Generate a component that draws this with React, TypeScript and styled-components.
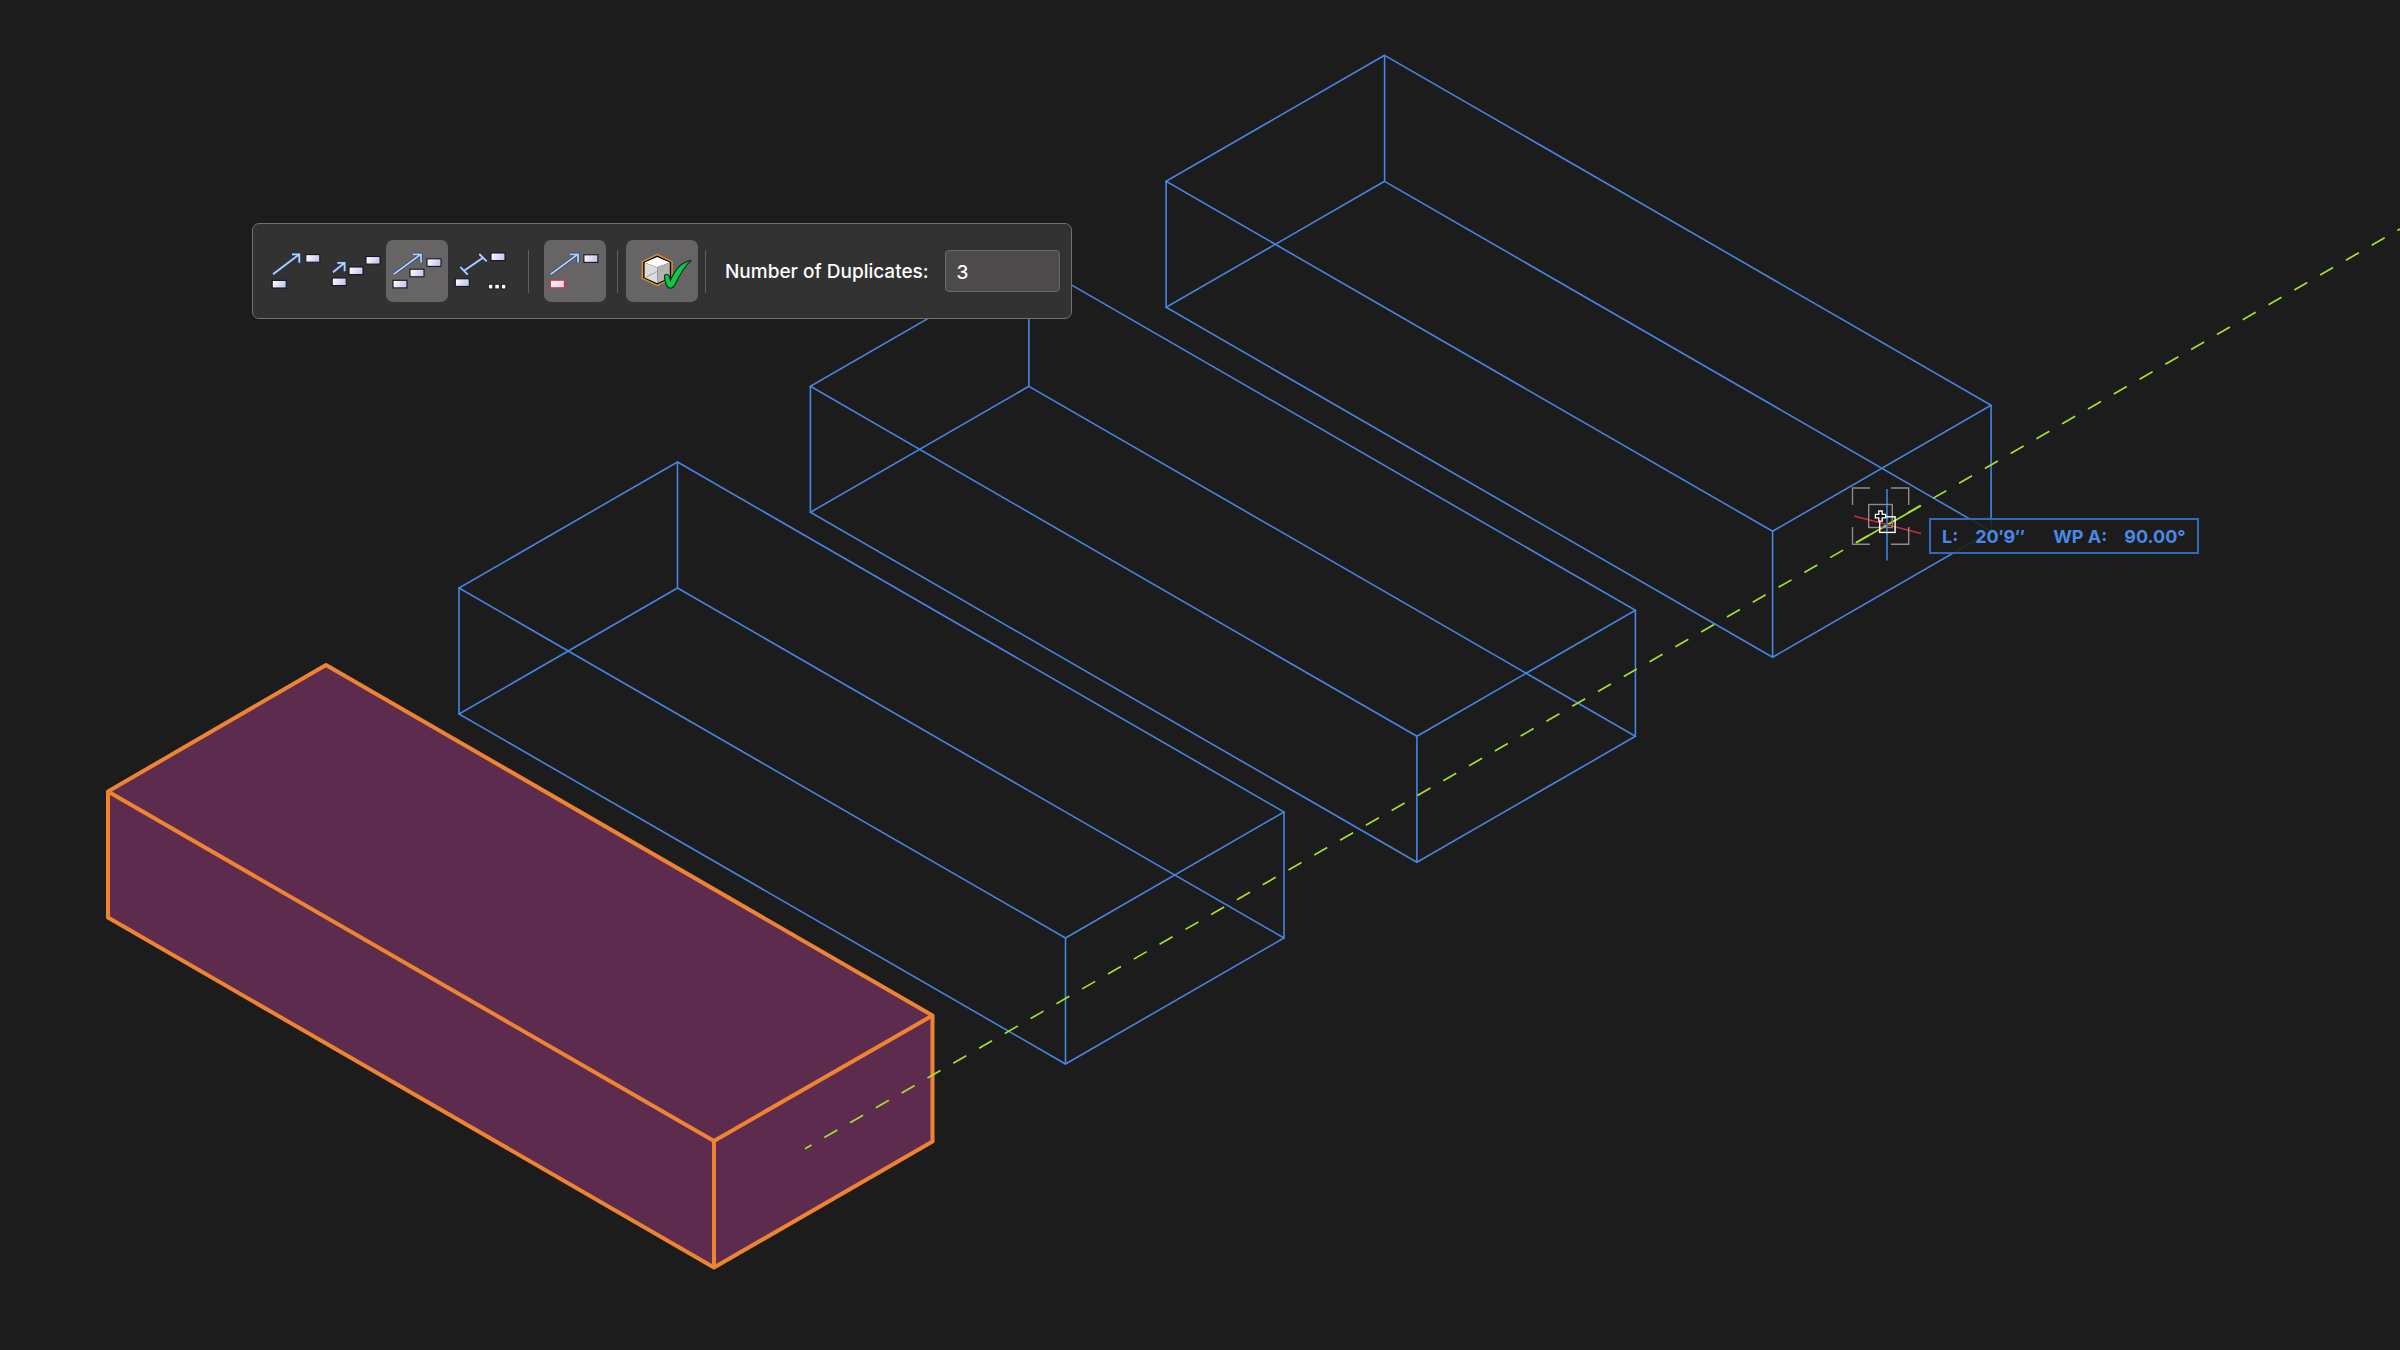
import React, { useState } from "react";
import styled, { createGlobalStyle } from "styled-components";

const GlobalStyle = createGlobalStyle`
  body {
    margin: 0;
    background: #1c1c1c;
    font-family: Inter, "Liberation Sans", sans-serif;
  }
`;

const Workspace = styled.main`
  position: relative;
  min-height: 100vh;
  overflow: hidden;
`;

const Drawing = styled.svg`
  display: block;
  width: 100%;
  height: auto;
`;

const Toolbar = styled.form`
  position: absolute;
  top: 223px;
  left: 252px;
  display: flex;
  align-items: center;
  padding: 16px 11px 16px 9px;
  border: 1px solid #707070;
  border-radius: 7px;
  background: #323232;
`;

const ToolButton = styled.button<{ $wide?: boolean }>`
  width: ${(p) => (p.$wide ? 72 : 62)}px;
  height: 62px;
  padding: 0;
  border: 0;
  border-radius: 7px;
  background: transparent;
  cursor: pointer;

  &[aria-pressed="true"] {
    background: #666465;
  }

  svg {
    display: block;
  }
`;

const Separator = styled.span<{ $before: number; $after: number }>`
  width: 1px;
  height: 43px;
  margin: 0 ${(p) => p.$after}px 0 ${(p) => p.$before}px;
  background: #606060;
`;

const FieldLabel = styled.label`
  margin-right: 16px;
  padding-top: 2px;
  color: #fff;
  font-size: 19px;
  font-weight: 500;
  line-height: 24px;
  white-space: nowrap;
`;

const NumberField = styled.input`
  box-sizing: border-box;
  width: 115px;
  height: 42px;
  padding: 2px 11px 0;
  border: 1px solid #6a6869;
  border-radius: 4px;
  outline: 0;
  background: #4d4a4b;
  color: #fff;
  font: 500 19px Inter, "Liberation Sans", sans-serif;
`;

const DataBar = styled.dl`
  position: absolute;
  top: 518px;
  left: 1929px;
  display: flex;
  align-items: center;
  gap: 28px;
  margin: 0;
  padding: 7px 11px 5px 11px;
  border: 2px solid #3368b5;
  background: rgba(28, 28, 28, 0.88);
  color: #4a88e6;
  font-size: 18px;
  font-weight: 700;
  line-height: 20px;
  white-space: nowrap;
`;

const DataPair = styled.div`
  display: flex;
  gap: 17px;

  dd {
    margin: 0;
  }
`;

/* Extents of one extruded box, measured from its top corner. */
const wirePath = (x: number, y: number) =>
  [
    `M${x} ${y}l-218.5 126l606.5 350l218.5 -126z`,
    `M${x} ${y + 126}l-218.5 126l606.5 350l218.5 -126z`,
    `M${x} ${y}v126`,
    `M${x - 218.5} ${y + 126}v126`,
    `M${x + 388} ${y + 476}v126`,
    `M${x + 606.5} ${y + 350}v126`,
  ].join("");

const duplicates: [number, number][] = [
  [677.5, 462],
  [1028.9, 260.3],
  [1384.6, 55.3],
];

function Chip({ x, y, red }: { x: number; y: number; red?: boolean }) {
  return (
    <rect
      x={x}
      y={y}
      width="14"
      height="7.6"
      fill={red ? "url(#chipRed)" : "url(#chip)"}
      stroke={red ? "#e8283c" : "#14141c"}
      strokeWidth="1.1"
    />
  );
}

function Stroke({ d }: { d: string }) {
  return (
    <g fill="none">
      <path d={d} stroke="#22406e" strokeWidth="3" />
      <path d={d} stroke="#b4d0fa" strokeWidth="1.8" />
    </g>
  );
}

function Icon({ width = 62, children }: { width?: number; children: React.ReactNode }) {
  return (
    <svg width={width} height="62" viewBox={`0 0 ${width} 62`} aria-hidden="true">
      {children}
    </svg>
  );
}

const modes = [
  {
    name: "Distribute from first to last",
    icon: (
      <>
        <Stroke d="M11 34.3L37.3 14.3M30 14.3H37.3V22.7" />
        <Chip x={43.8} y={14.6} />
        <Chip x={10.2} y={40.4} />
      </>
    ),
  },
  {
    name: "Offset by spacing",
    icon: (
      <>
        <Stroke d="M9 32.3L20.4 23M13.3 22.9H20.6V31.3" />
        <Chip x={8.2} y={38} />
        <Chip x={25} y={27} />
        <Chip x={42} y={16.5} />
      </>
    ),
  },
  {
    name: "Distribute along line",
    icon: (
      <>
        <Stroke d="M7.7 34.3L34.8 14.3M27 14.3H35V22.5" />
        <Chip x={7} y={40.3} />
        <Chip x={24} y={29.2} />
        <Chip x={41} y={18.8} />
      </>
    ),
  },
  {
    name: "Distribute by distance",
    icon: (
      <>
        <Stroke d="M16 30.7L35 17.7M12.3 27L19.7 34.7M31.3 14L38.7 21.3" />
        <Chip x={43} y={13} />
        <Chip x={7.3} y={38.8} />
        <g fill="#fff" stroke="#111" strokeWidth="0.8">
          <rect x="40.4" y="44.3" width="4.4" height="4.6" />
          <rect x="46.9" y="44.3" width="4.4" height="4.6" />
          <rect x="53.4" y="44.3" width="4.4" height="4.6" />
        </g>
      </>
    ),
  },
];

export default function App() {
  const [mode, setMode] = useState(2);
  const [retain, setRetain] = useState(true);
  const [solid, setSolid] = useState(true);
  const [count, setCount] = useState("3");

  return (
    <>
      <GlobalStyle />
      <Workspace>
        <Drawing viewBox="0 0 2400 1350" role="img" aria-label="Model view">
          <defs>
            <linearGradient id="chip" x1="0" y1="0" x2="1" y2="0.3">
              <stop offset="0" stopColor="#fff" />
              <stop offset="1" stopColor="#c9c6f2" />
            </linearGradient>
            <linearGradient id="chipRed" x1="0" y1="0" x2="1" y2="0.3">
              <stop offset="0" stopColor="#fff" />
              <stop offset="1" stopColor="#dcd2f2" />
            </linearGradient>
          </defs>

          <g stroke="#ee8432" strokeWidth="4" strokeLinejoin="round">
            <path d="M326 665L932.5 1015.5V1141.5L714 1267.5L108 917.5V791.5Z" fill="#5c2b4e" />
            <path d="M108 791.5L714 1141L932.5 1015.5M714 1141V1267.5" fill="none" />
          </g>

          {duplicates.map(([x, y]) => (
            <path key={x} d={wirePath(x, y)} fill="none" stroke="#4684e2" strokeWidth="1.6" />
          ))}

          <path
            d="M805 1148.7L2400 229"
            stroke="#a2e22e"
            strokeWidth="1.7"
            strokeDasharray="15 14.77"
            strokeDashoffset="7.5"
          />

          <path d="M1856 542.7L1921 505.7" stroke="#a2e22e" strokeWidth="1.7" />
          <path d="M1854 516L1921 533.5" stroke="#cc2c3c" strokeWidth="1.3" />
          <path d="M1887 489V560.5" stroke="#3c78c8" strokeWidth="1.8" />
          <g fill="none" stroke="#8c8c8c" strokeWidth="1.4">
            <path d="M1870 488H1852.5V505M1891 488H1908.7V505M1852.5 527V544.3H1870M1908.7 527V544.3H1891" />
            <rect x="1868.7" y="504.5" width="23.6" height="23" />
          </g>
          <rect x="1879.7" y="516.8" width="15.4" height="15.6" fill="none" stroke="#fff" strokeWidth="1.4" />
          <path
            d="M1878.8 511h3.4v3.4h3.4v3.4h-3.4v3.4h-3.4v-3.4h-3.4v-3.4h3.4z"
            fill="#111"
            stroke="#fff"
            strokeWidth="1.3"
          />
        </Drawing>

        <Toolbar aria-label="Move by points" onSubmit={(e) => e.preventDefault()}>
          {modes.map((m, i) => (
            <ToolButton
              key={m.name}
              type="button"
              aria-label={m.name}
              aria-pressed={mode === i}
              onClick={() => setMode(i)}
            >
              <Icon>{m.icon}</Icon>
            </ToolButton>
          ))}
          <Separator $before={18} $after={15} />
          <ToolButton
            type="button"
            aria-label="Retain original"
            aria-pressed={retain}
            onClick={() => setRetain(!retain)}
          >
            <Icon>
              <Stroke d="M6.7 34.3L33.8 14.3M26 14.3H34V22.5" />
              <Chip x={39.9} y={14.8} />
              <Chip x={6.4} y={40.2} red />
            </Icon>
          </ToolButton>
          <Separator $before={11} $after={8} />
          <ToolButton
            $wide
            type="button"
            aria-label="Object preview"
            aria-pressed={solid}
            onClick={() => setSolid(!solid)}
          >
            <Icon width={72}>
              <path
                d="M31.2 14.6L46 21.6V38.4L31.2 45.4L16.4 38.4V21.6Z"
                fill="#0c0c0c"
                stroke="#e08c28"
                strokeWidth="1.5"
              />
              <path d="M31.2 17L43.8 22.6L31.2 27.2L18.6 22.6Z" fill="#fff" />
              <path d="M18.6 22.6L31.2 27.2V43.2L18.6 37.4Z" fill="#dcdcdc" />
              <path d="M43.8 22.6L31.2 27.2V43.2L43.8 37.4Z" fill="#b2b2b2" />
              <path d="M20 37L31 31.6" stroke="#6c7c98" strokeWidth="0.6" />
              <path
                d="M38.6 35.4C40.2 33.8 42.6 34 43.4 37L44.4 40.4C48.4 31.6 53.4 22.6 65.4 20.4C58.4 26 53.4 35.4 49.2 44.2C47.6 47.8 44.2 49.6 41.8 47C39.6 44.6 38.2 39 38.6 35.4Z"
                fill="#10c848"
                stroke="#0a3818"
                strokeWidth="1.2"
              />
            </Icon>
          </ToolButton>
          <Separator $before={7} $after={19} />
          <FieldLabel htmlFor="duplicates">Number of Duplicates:</FieldLabel>
          <NumberField
            id="duplicates"
            inputMode="numeric"
            value={count}
            onChange={(e) => setCount(e.target.value)}
          />
        </Toolbar>

        <DataBar>
          <DataPair>
            <dt>L:</dt>
            <dd>20′9″</dd>
          </DataPair>
          <DataPair>
            <dt>WP A:</dt>
            <dd>90.00°</dd>
          </DataPair>
        </DataBar>
      </Workspace>
    </>
  );
}
